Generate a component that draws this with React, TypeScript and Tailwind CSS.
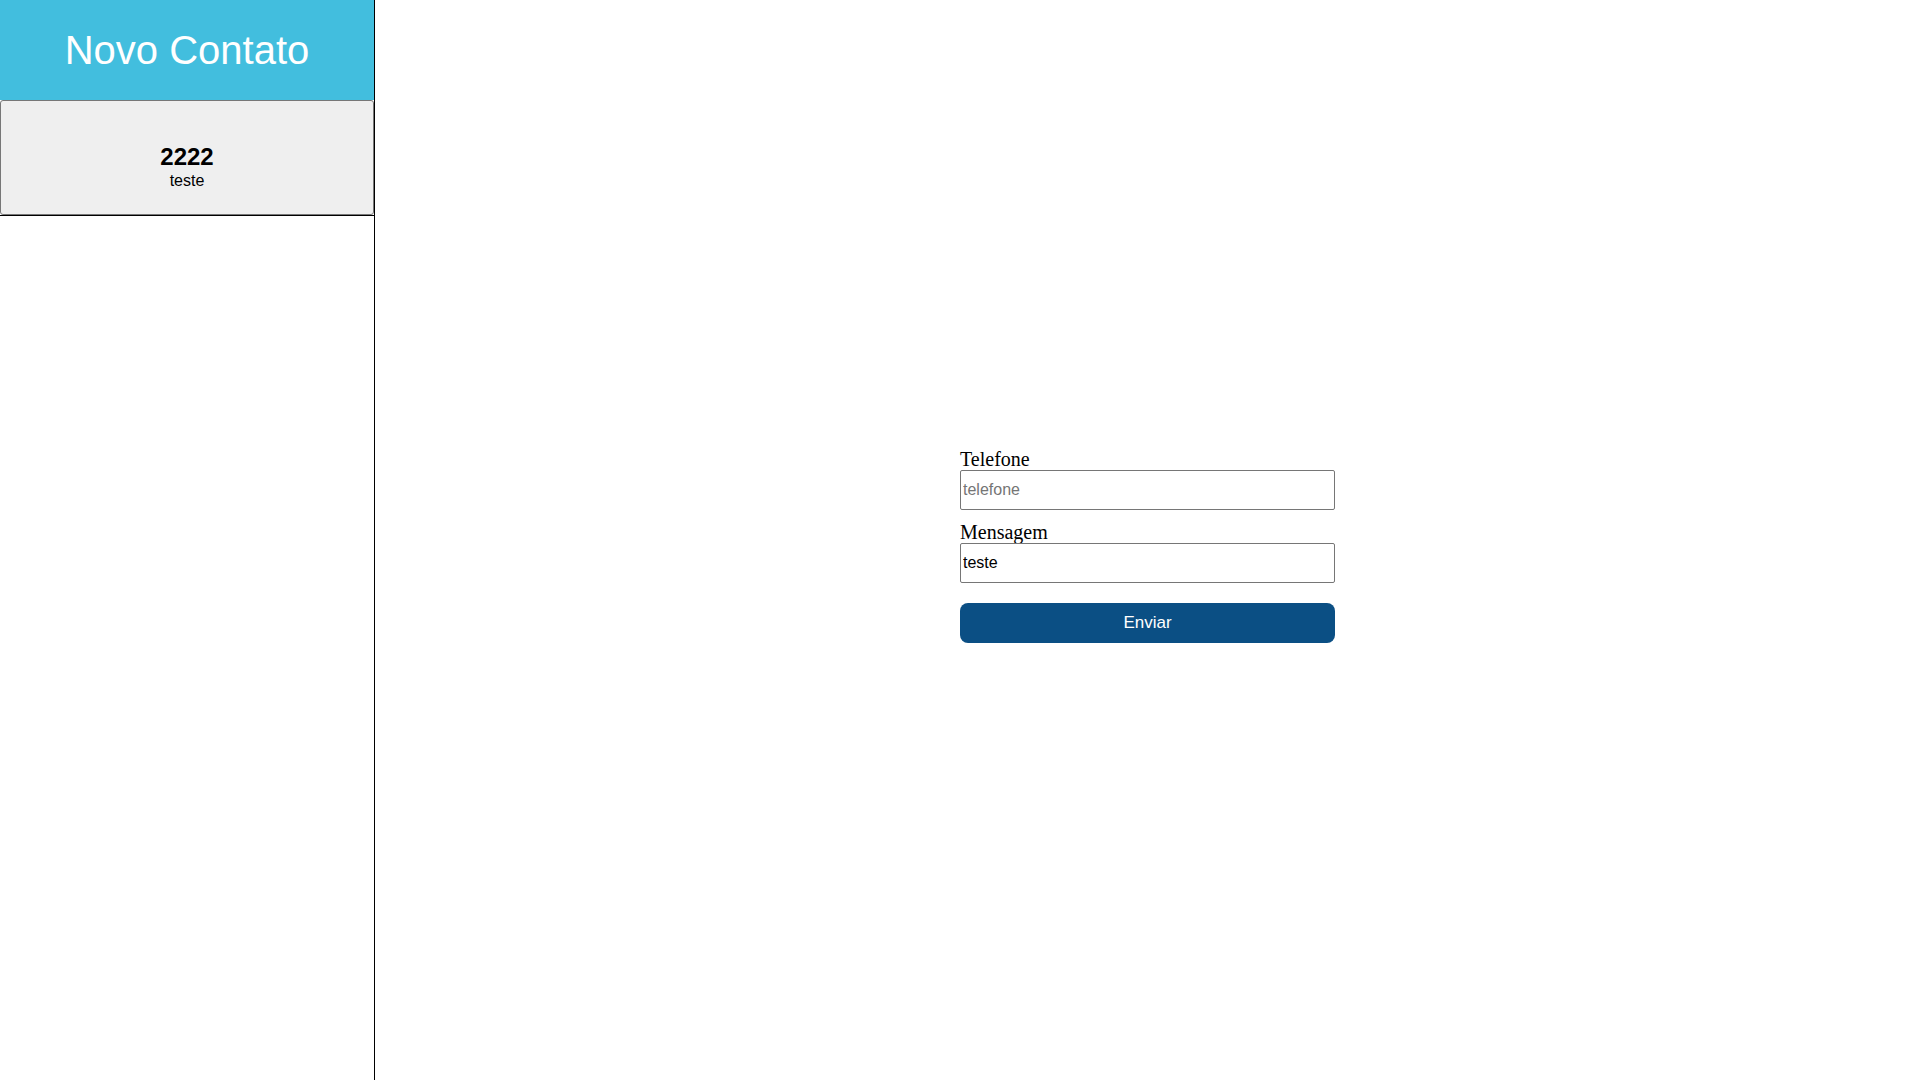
import { useState } from 'react';

type Contato = { telefone: string; mensagem: string };

export default function App() {
  const [telefone, setTelefone] = useState('');
  const [mensagem, setMensagem] = useState('teste');
  const [contatos, setContatos] = useState<Contato[]>([{ telefone: '2222', mensagem: 'teste' }]);

  const enviar = (e: React.FormEvent) => {
    e.preventDefault();
    if (!telefone) return;
    setContatos([...contatos, { telefone, mensagem }]);
    setTelefone('');
  };

  return (
    <div className="flex h-screen w-full bg-white font-['Liberation_Sans',Arial,sans-serif]">
      <aside className="flex w-[375px] shrink-0 flex-col border-r border-black">
        <div className="flex h-[100px] items-center justify-center bg-[#42bede]">
          <h1 className="text-[40px] leading-none text-white">Novo Contato</h1>
        </div>
        <div className="border-b border-black">
          {contatos.map((c, i) => (
            <div
              key={i}
              className="flex h-[115px] flex-col items-center justify-center rounded-[3px] border border-[#777] bg-[#efefef] pt-[19px] text-black"
            >
              <span className="text-[24px] font-bold leading-[28px]">{c.telefone}</span>
              <span className="text-[16px] leading-[20px]">{c.mensagem}</span>
            </div>
          ))}
        </div>
      </aside>

      <main className="flex flex-1 items-center justify-center pt-[11px]">
        <form onSubmit={enviar} className="flex w-[375px] flex-col">
          <label className="font-['Liberation_Serif','Times_New_Roman',serif] text-[20px] leading-[22px] text-black">
            Telefone
          </label>
          <input
            value={telefone}
            onChange={(e) => setTelefone(e.target.value)}
            placeholder="telefone"
            className="h-[40px] w-full rounded-[2px] border border-[#767676] px-[2px] text-[16px] text-black outline-none placeholder:text-[#757575]"
          />
          <label className="mt-[11px] font-['Liberation_Serif','Times_New_Roman',serif] text-[20px] leading-[22px] text-black">
            Mensagem
          </label>
          <input
            value={mensagem}
            onChange={(e) => setMensagem(e.target.value)}
            placeholder="mensagem"
            className="h-[40px] w-full rounded-[2px] border border-[#767676] px-[2px] text-[16px] text-black outline-none placeholder:text-[#757575]"
          />
          <button
            type="submit"
            className="mt-[20px] h-[40px] w-full rounded-[8px] bg-[#0b4f84] text-[17px] text-white"
          >
            Enviar
          </button>
        </form>
      </main>
    </div>
  );
}
